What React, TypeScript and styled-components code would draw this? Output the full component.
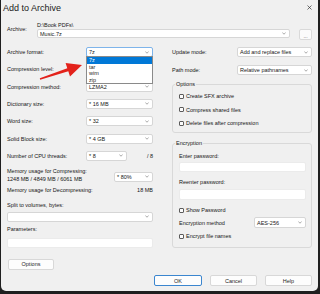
import React from 'react'
import styled, { createGlobalStyle } from 'styled-components'

const GlobalStyle = createGlobalStyle`
  html, body {
    margin: 0;
    padding: 0;
    background: #1f1f1f;
  }
  body {
    width: 320px;
    height: 294px;
    overflow: hidden;
    padding: 0 2px 0 1px;
    box-sizing: border-box;
  }
`

const Window = styled.div`
  position: relative;
  width: 317px;
  height: 291px;
  box-sizing: border-box;
  background: #f0f0f0;
  border-radius: 0 0 5px 5px;
  display: flex;
  flex-direction: column;
  font-family: "Liberation Sans", Arial, sans-serif;
  font-size: 5.5px;
  color: #161616;
`

const TitleBar = styled.div`
  height: 15px;
  display: flex;
  align-items: center;
  justify-content: space-between;
  padding: 0 6px 0 2px;
  font-size: 9px;
  color: #1a1a1a;
`

const Content = styled.div`
  flex: 1;
  display: flex;
  flex-direction: column;
  padding: 6px 6px 5px 6px;
`

const ArchiveBlock = styled.div`
  display: grid;
  grid-template-columns: 30px 1fr;
  grid-template-rows: 8px 11px;
`

const ArchiveLabel = styled.div`
  grid-row: 1 / span 2;
  line-height: 8px;
  margin-top: 4px;
`

const PathText = styled.div`
  line-height: 8px;
`

const ComboRow = styled.div`
  display: flex;
  align-items: flex-start;
  gap: 9px;
`

const Combo = styled.div<{ $focused?: boolean; $h?: number }>`
  position: relative;
  height: ${p => p.$h ?? 10}px;
  box-sizing: border-box;
  background: #fff;
  border: 1px solid ${p => (p.$focused ? '#7eb4ea' : '#d6d6d6')};
  border-radius: 2px;
  display: flex;
  align-items: center;
  justify-content: space-between;
  padding: 0 3px 0 2px;
  line-height: 8px;
  flex: 1;
`

const BrowseButton = styled.div`
  width: 13px;
  height: 11px;
  box-sizing: border-box;
  background: #fbfbfb;
  border: 1px solid #d9d9d9;
  border-radius: 2px;
  display: flex;
  align-items: flex-end;
  justify-content: center;
  font-size: 5px;
  line-height: 6px;
  color: #555;
`

const Columns = styled.div`
  display: grid;
  grid-template-columns: 146px 140px;
  column-gap: 19px;
  margin-top: 7px;
`

const Column = styled.div`
  display: flex;
  flex-direction: column;
`

const SettingsList = styled.div`
  display: flex;
  flex-direction: column;
  gap: 7.33px;
`

const SettingRow = styled.div<{ $cols?: string }>`
  display: grid;
  grid-template-columns: ${p => p.$cols ?? '79px 1fr'};
  height: 10px;
  align-items: center;
  line-height: 10px;
`

const Trail = styled.span`
  justify-self: end;
`

const MemoryBlock = styled.div`
  display: grid;
  grid-template-columns: 1fr 39px;
  margin-top: 6px;
  line-height: 8px;
`

const MemoryCombo = styled(Combo)`
  margin-top: 5px;
`

const InfoRow = styled.div`
  display: flex;
  justify-content: space-between;
  line-height: 8px;
  margin-top: 3px;
`

const FieldLabel = styled.div<{ $mt?: number }>`
  line-height: 8px;
  margin-top: ${p => p.$mt ?? 0}px;
`

const Spaced = styled.div<{ $mt: number }>`
  margin-top: ${p => p.$mt}px;
  display: flex;
`

const TextInput = styled.div<{ $h?: number }>`
  flex: 1;
  height: ${p => p.$h ?? 10}px;
  box-sizing: border-box;
  background: #fff;
  border: 1px solid #ebebeb;
  border-radius: 2px;
`

const Button = styled.div<{ $w: number; $default?: boolean }>`
  width: ${p => p.$w}px;
  height: 11px;
  box-sizing: border-box;
  background: #fdfdfd;
  border: 1px solid ${p => (p.$default ? '#3b86cf' : '#d8d8d8')};
  border-radius: 2px;
  display: flex;
  align-items: center;
  justify-content: center;
  color: #1f1f1f;
`

const OptionsButton = styled(Button)`
  margin-top: 11px;
  margin-left: 1px;
`

const ModeRow = styled.div<{ $mt?: number }>`
  display: grid;
  grid-template-columns: 65px 1fr;
  height: 10px;
  align-items: center;
  line-height: 10px;
  margin-top: ${p => p.$mt ?? 0}px;
`

const GroupBox = styled.fieldset<{ $mt: number; $pt: number; $pb: number }>`
  margin: ${p => p.$mt}px 0 0 0;
  padding: ${p => p.$pt}px 5px ${p => p.$pb}px 6px;
  border: 1px solid #d9d9d9;
  border-radius: 3px;
  min-width: 0;
  display: flex;
  flex-direction: column;
`

const Legend = styled.legend`
  padding: 0 1px;
  margin-left: -4px;
  line-height: 8px;
  font-size: 5.5px;
`

const CheckRow = styled.div<{ $mt?: number }>`
  display: flex;
  align-items: center;
  gap: 2px;
  height: 8px;
  line-height: 8px;
  margin-top: ${p => p.$mt ?? 0}px;
`

const CheckBox = styled.span`
  width: 5px;
  height: 5px;
  box-sizing: border-box;
  border: 0.8px solid #5c5c5c;
  border-radius: 1px;
  background: #fbfbfb;
`

const MethodRow = styled.div`
  display: grid;
  grid-template-columns: 1fr 52px;
  align-items: center;
  margin-top: 3px;
  height: 11px;
`

const ButtonRow = styled.div`
  display: flex;
  justify-content: flex-end;
  gap: 8px;
  margin-top: auto;
`

const Dropdown = styled.div`
  position: absolute;
  top: 100%;
  left: -1px;
  right: -1px;
  height: 28px;
  box-sizing: border-box;
  background: #fff;
  border: 1px solid #8a8a8a;
  display: flex;
  flex-direction: column;
  z-index: 2;
`

const DropItem = styled.div<{ $selected?: boolean }>`
  height: 6.5px;
  line-height: 6.5px;
  padding-left: 2px;
  background: ${p => (p.$selected ? '#0078d7' : 'transparent')};
  color: ${p => (p.$selected ? '#fff' : '#1f1f1f')};
`

const ArrowLayer = styled.svg`
  position: absolute;
  left: 37px;
  top: 60px;
  width: 48px;
  height: 24px;
  pointer-events: none;
  z-index: 3;
`

const Chevron = () => (
  <svg width="4" height="3" viewBox="0 0 4 3">
    <polyline points="0.4,0.7 2,2.2 3.6,0.7" fill="none" stroke="#6b6b6b" strokeWidth="0.6" />
  </svg>
)

const CloseIcon = () => (
  <svg width="5" height="5" viewBox="0 0 5 5">
    <path d="M0.5 0.5 L4.5 4.5 M4.5 0.5 L0.5 4.5" stroke="#333" strokeWidth="0.7" />
  </svg>
)

function Select({ value, focused, h, children }: { value?: string; focused?: boolean; h?: number; children?: React.ReactNode }) {
  return (
    <Combo $focused={focused} $h={h}>
      <span>{value}</span>
      <Chevron />
      {children}
    </Combo>
  )
}

function Check({ label, mt }: { label: string; mt?: number }) {
  return (
    <CheckRow $mt={mt}>
      <CheckBox />
      <span>{label}</span>
    </CheckRow>
  )
}

export default function App() {
  return (
    <>
      <GlobalStyle />
      <Window>
        <TitleBar>
          <span>Add to Archive</span>
          <CloseIcon />
        </TitleBar>
        <Content>
          <ArchiveBlock>
            <ArchiveLabel>Archive:</ArchiveLabel>
            <PathText>D:\Book PDFs\</PathText>
            <ComboRow>
              <Select value="Music.7z" h={9} />
              <BrowseButton>...</BrowseButton>
            </ComboRow>
          </ArchiveBlock>

          <Columns>
            <Column>
              <SettingsList>
                <SettingRow>
                  <span>Archive format:</span>
                  <Select value="7z" focused>
                    <Dropdown>
                      <DropItem $selected>7z</DropItem>
                      <DropItem>tar</DropItem>
                      <DropItem>wim</DropItem>
                      <DropItem>zip</DropItem>
                    </Dropdown>
                  </Select>
                </SettingRow>
                <SettingRow>
                  <span>Compression level:</span>
                  <Select />
                </SettingRow>
                <SettingRow>
                  <span>Compression method:</span>
                  <Select value="LZMA2" />
                </SettingRow>
                <SettingRow>
                  <span>Dictionary size:</span>
                  <Select value="* 16 MB" />
                </SettingRow>
                <SettingRow>
                  <span>Word size:</span>
                  <Select value="* 32" />
                </SettingRow>
                <SettingRow>
                  <span>Solid Block size:</span>
                  <Select value="* 4 GB" />
                </SettingRow>
                <SettingRow $cols="79px 41px 1fr">
                  <span>Number of CPU threads:</span>
                  <Select value="* 8" />
                  <Trail>/ 8</Trail>
                </SettingRow>
              </SettingsList>

              <MemoryBlock>
                <div>
                  Memory usage for Compressing:
                  <br />
                  1248 MB / 4849 MB / 6061 MB
                </div>
                <MemoryCombo>
                  <span>* 80%</span>
                  <Chevron />
                </MemoryCombo>
              </MemoryBlock>
              <InfoRow>
                <span>Memory usage for Decompressing:</span>
                <span>18 MB</span>
              </InfoRow>

              <FieldLabel $mt={7}>Split to volumes, bytes:</FieldLabel>
              <Spaced $mt={3}>
                <Select />
              </Spaced>
              <FieldLabel $mt={3}>Parameters:</FieldLabel>
              <Spaced $mt={5}>
                <TextInput />
              </Spaced>
              <OptionsButton $w={46}>Options</OptionsButton>
            </Column>

            <Column>
              <ModeRow>
                <span>Update mode:</span>
                <Select value="Add and replace files" />
              </ModeRow>
              <ModeRow $mt={8}>
                <span>Path mode:</span>
                <Select value="Relative pathnames" />
              </ModeRow>

              <GroupBox $mt={5} $pt={4} $pb={5}>
                <Legend>Options</Legend>
                <Check label="Create SFX archive" />
                <Check label="Compress shared files" mt={5.5} />
                <Check label="Delete files after compression" mt={5.5} />
              </GroupBox>

              <GroupBox $mt={6} $pt={5} $pb={7}>
                <Legend>Encryption</Legend>
                <FieldLabel>Enter password:</FieldLabel>
                <Spaced $mt={2}>
                  <TextInput />
                </Spaced>
                <FieldLabel $mt={6}>Reenter password:</FieldLabel>
                <Spaced $mt={3}>
                  <TextInput $h={11} />
                </Spaced>
                <Check label="Show Password" mt={6} />
                <MethodRow>
                  <span>Encryption method</span>
                  <Select value="AES-256" h={11} />
                </MethodRow>
                <Check label="Encrypt file names" mt={4} />
              </GroupBox>
            </Column>
          </Columns>

          <ButtonRow>
            <Button $w={48} $default>OK</Button>
            <Button $w={47}>Cancel</Button>
            <Button $w={47}>Help</Button>
          </ButtonRow>
        </Content>

        <ArrowLayer viewBox="0 0 48 24">
          <polygon
            points="2.2,19.7 30.3,11.3 32,16.4 44,5 27.6,3.1 29.3,8.2 1.8,18.3"
            fill="#e3221b"
          />
        </ArrowLayer>
      </Window>
    </>
  )
}
